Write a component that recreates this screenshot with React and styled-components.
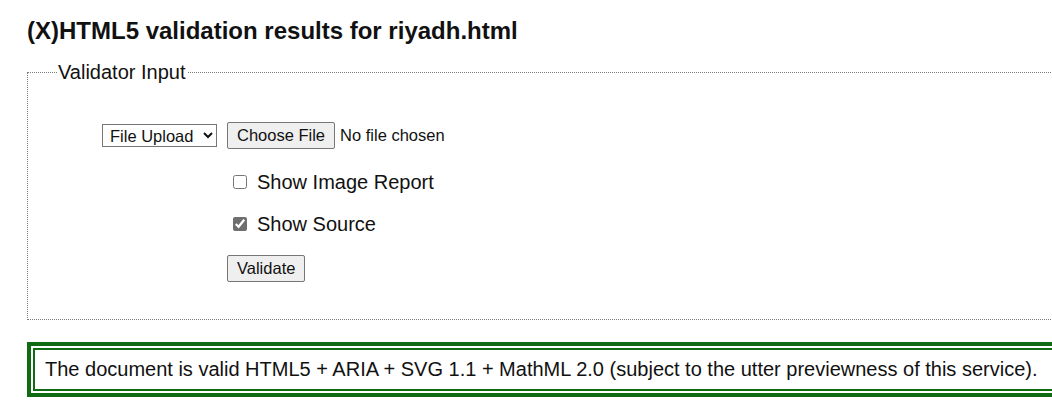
import React from 'react';
import styled, { createGlobalStyle } from 'styled-components';

const Global = createGlobalStyle`
  html, body {
    margin: 0;
    padding: 0;
    overflow: hidden;
    background: #fff;
  }
  body {
    font-family: "Liberation Sans", Arial, sans-serif;
    color: #111;
  }
`;

const Page = styled.div`
  width: 1060px;
  padding: 17px 0 0 27px;
`;

const Heading = styled.h2`
  margin: 0 0 16px 0;
  font-size: 24px;
  font-weight: bold;
  line-height: 28px;
`;

const Box = styled.fieldset`
  margin: 0;
  padding: 38px 0 37px 29px;
  border: 1px dotted #7a7a7a;
  min-width: 0;
`;

const Legend = styled.legend`
  margin-left: 0;
  padding: 0 1px;
  font-size: 20px;
  line-height: 23px;
`;

const Form = styled.div`
  display: grid;
  grid-template-columns: 125px auto;
  align-items: center;
  margin-left: 45px;
`;

const Cell = styled.div`
  grid-column: ${p => p.$col || 'auto'};
  margin-top: ${p => p.$top || 0}px;
  display: flex;
  align-items: center;
`;

const Select = styled.select`
  font-family: "Liberation Sans", Arial, sans-serif;
  font-size: 16.5px;
  height: 23px;
  width: 115px;
  padding: 0 0 0 3px;
  margin: 0;
  border: 1px solid #767676;
  border-radius: 0;
  background: #fff;
  color: #111;
`;

const FileInput = styled.input`
  font-family: "Liberation Sans", Arial, sans-serif;
  font-size: 16.5px;
  margin: 0;
  color: #111;
  &::file-selector-button {
    font-family: "Liberation Sans", Arial, sans-serif;
    font-size: 16.5px;
    height: 27px;
    padding: 0 9px;
    margin-right: 5px;
    border: 1px solid #767676;
    border-radius: 2px;
    background: #efefef;
    color: #111;
  }
`;

const Check = styled.label`
  display: flex;
  align-items: center;
  font-size: 20px;
  line-height: 26px;
  input {
    width: 14px;
    height: 14px;
    margin: 0 10px 0 6px;
    accent-color: #6f6f6f;
  }
`;

const Button = styled.button`
  font-family: "Liberation Sans", Arial, sans-serif;
  font-size: 16.5px;
  height: 27px;
  padding: 0 9px;
  margin: 0;
  border: 1px solid #767676;
  border-radius: 2px;
  background: #efefef;
  color: #111;
`;

const Result = styled.div`
  margin-top: 22px;
  border: 4px solid #116b12;
  padding: 2px;
`;

const ResultInner = styled.p`
  margin: 0;
  border: 2px solid #116b12;
  padding: 7px 10px;
  font-size: 20px;
  line-height: 25px;
  color: #111;
`;

export default function App() {
  return (
    <>
      <Global />
      <Page>
        <Heading>(X)HTML5 validation results for riyadh.html</Heading>
        <Box>
          <Legend>Validator Input</Legend>
          <Form>
            <Cell>
              <Select defaultValue="file">
                <option value="file">File Upload</option>
                <option value="uri">Address</option>
                <option value="text">Text Field</option>
              </Select>
            </Cell>
            <Cell>
              <FileInput type="file" />
            </Cell>
            <Cell $col="2" $top={20}>
              <Check>
                <input type="checkbox" />
                Show Image Report
              </Check>
            </Cell>
            <Cell $col="2" $top={16}>
              <Check>
                <input type="checkbox" defaultChecked />
                Show Source
              </Check>
            </Cell>
            <Cell $col="2" $top={18}>
              <Button>Validate</Button>
            </Cell>
          </Form>
        </Box>
        <Result>
          <ResultInner>
            The document is valid HTML5 + ARIA + SVG 1.1 + MathML 2.0 (subject to the utter previewness of this service).
          </ResultInner>
        </Result>
      </Page>
    </>
  );
}
